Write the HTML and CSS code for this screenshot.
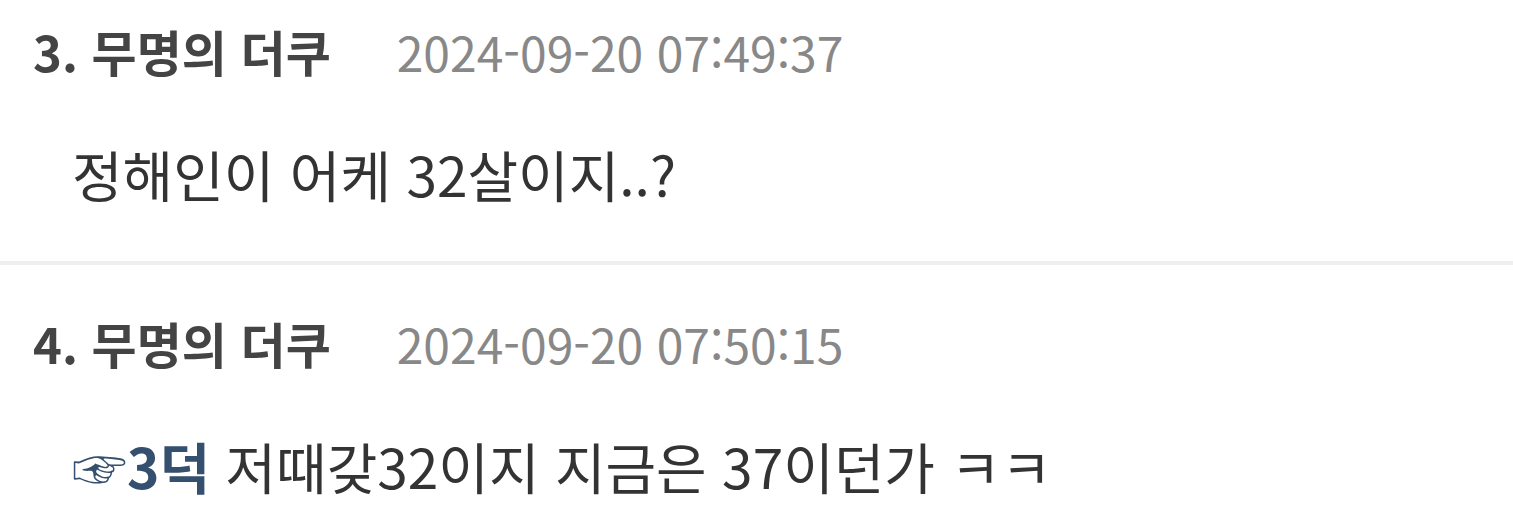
FILE: index.html
```html
<!DOCTYPE html>
<html lang="ko">
<head>
    <meta charset="UTF-8">
    <meta name="viewport" content="width=device-width, initial-scale=1.0">
    <title>댓글</title>
    <link rel="stylesheet" href="styles.css">
</head>
<body>
<div class="comments">
    <div class="comment">
        <div class="comment-head">
            <span class="comment-name">3. 무명의 더쿠</span>
            <span class="comment-date">2024-09-20 07:49:37</span>
        </div>
        <div class="comment-body">정해인이 어케 32살이지..?</div>
    </div>
    <div class="comment">
        <div class="comment-head">
            <span class="comment-name">4. 무명의 더쿠</span>
            <span class="comment-date">2024-09-20 07:50:15</span>
        </div>
        <div class="comment-body"><a class="reply-to" href="#">☞3덕</a> 저때갖32이지 지금은 37이던가 ㅋㅋ</div>
    </div>
</div>
</body>
</html>
```

FILE: styles.css
```css
/* 전체 */
body {
    margin: 0;
    padding: 0;
    background: #fff;
    font-family: 'Noto Sans CJK KR', 'Noto Sans', sans-serif;
    color: #333;
    overflow: hidden;
}

.comments {
    width: 100%;
}

.comment {
    padding: 43px 0 53px 0;
    border-bottom: 4px solid #eee;
}

.comment:first-child {
    padding-top: 16px;
}

.comment:last-child {
    border-bottom: none;
    padding-bottom: 0;
}

.comment-head {
    display: flex;
    align-items: baseline;
    gap: 66px;
    padding-left: 33px;
    line-height: 70px;
}

.comment-name {
    font-size: 49px;
    font-weight: bold;
    color: #444;
}

.comment-date {
    font-size: 48px;
    color: #888;
}

.comment-body {
    padding-left: 72px;
    margin-top: 52px;
    font-size: 55px;
    line-height: 70px;
}

.reply-to {
    color: #34506e;
    font-weight: bold;
    text-decoration: none;
}
```
